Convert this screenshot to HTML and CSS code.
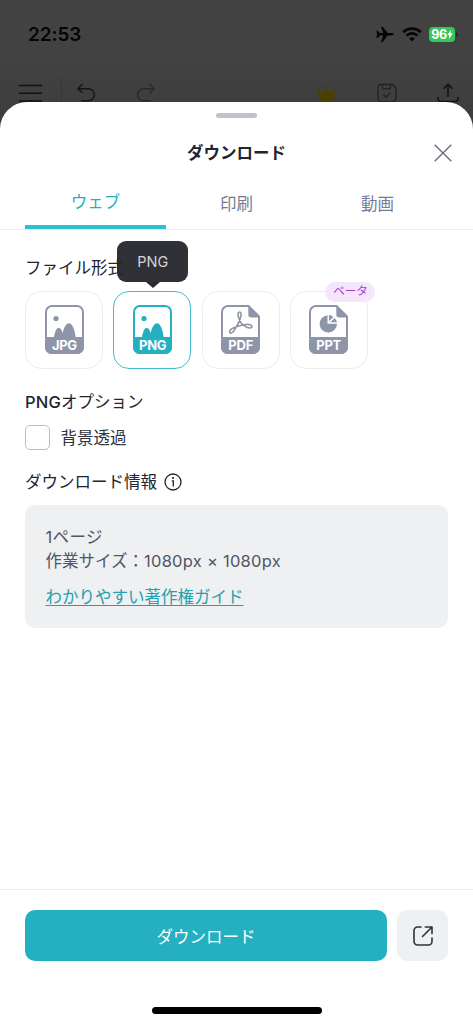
FILE: index.html
```html
<!DOCTYPE html>
<html lang="ja">
<head>
<meta charset="utf-8">
<title>ダウンロード</title>
<link rel="stylesheet" href="styles.css">
</head>
<body>
<div class="phone">
  <div class="status">
    <span class="clock">22:53</span>
    <div class="indicators">
      <svg width="18" height="17" viewBox="0 0 18 17"><path d="M.4 4.700h1.400l2 2.400h3.500L4.900.7h1.800l5 6.400h3.700c1.500 0 2.300.6 2.300 1.200s-.8 1.200-2.300 1.200h-3.700l-5 6.400H4.900l2.400-6.400H3.800l-2 2.400H.4l.8-3.600z" fill="#050505"/></svg>
      <svg width="20" height="15" viewBox="0 0 20 15" fill="none" stroke="#050505" stroke-width="2.700"><path d="M1.200 5.200a12.400 12.400 0 0 1 17.600 0M4.500 8.600a7.800 7.800 0 0 1 11 0"/><path d="M10 14.500l-3-3a4.200 4.200 0 0 1 6 0z" fill="#050505" stroke="none"/></svg>
      <div class="battery"><span>96</span><svg width="6" height="9" viewBox="0 0 6 9"><path d="M4 0L.3 5h2L1.800 9 5.800 3.600H3.600z" fill="#fff"/></svg></div>
      <i class="battery-tip"></i>
    </div>
  </div>
  <div class="toolbar">
    <svg class="menu" width="24" height="20" viewBox="0 0 24 20" fill="none" stroke="#111" stroke-width="1.600"><path d="M0 2.500h23M0 10.300h23M0 18h23"/></svg>
    <i class="divider"></i>
    <svg class="undo" width="19" height="20" viewBox="0 0 19 20" fill="none" stroke="#151515" stroke-width="1.500"><path d="M5.400.9L1 5.700l4.400 4.300M1 5.700h10.400a6 6 0 0 1 0 12H4"/></svg>
    <svg class="redo" width="19" height="20" viewBox="0 0 19 20" fill="none" stroke="#292929" stroke-width="1.400"><path d="M13.600.9L18 5.700 13.600 10M18 5.700H7.600a6 6 0 0 0 0 12H15"/></svg>
    <svg class="crown" width="19" height="15" viewBox="0 0 19 15" fill="#4b4000"><path d="M2.500 15L1 4.500l1.200-.7 4.300 3.500 2.300-5.800h1.400l2.300 5.800 4.300-3.500 1.200.7L16.500 15z"/><circle cx="1.500" cy="3.600" r="1.400"/><circle cx="9.500" cy="1.600" r="1.600"/><circle cx="17.500" cy="3.600" r="1.400"/></svg>
    <svg class="save" width="20" height="20" viewBox="0 0 20 20" fill="none" stroke="#222" stroke-width="1.400"><path d="M4 1.500h11.200L19 5.300V15a4 4 0 0 1-4 4H5a4 4 0 0 1-4-4V4.500a3 3 0 0 1 3-3zM5.400 1.500v3.400a1 1 0 0 0 1 1h6a1 1 0 0 0 1-1V1.500M6.300 11.400l2.800 2.700 4.500-4.500"/></svg>
    <svg class="upload" width="22" height="20" viewBox="0 0 22 20" fill="none" stroke="#111" stroke-width="1.500"><path d="M11 14V1.400M6.500 5.800L11 1.400l4.500 4.400M1 14v1.500a3 3 0 0 0 3 3h14a3 3 0 0 0 3-3V14"/></svg>
  </div>
  <main class="sheet">
    <div class="handle"></div>
    <header class="heading">
      <h1>ダウンロード</h1>
      <svg class="close" width="18" height="18" viewBox="0 0 18 18" fill="none" stroke="#686e83" stroke-width="1.400"><path d="M.7.7l16.600 16.600M17.300.7L.7 17.300"/></svg>
    </header>
    <nav class="tabs">
      <span class="tab active">ウェブ</span>
      <span class="tab">印刷</span>
      <span class="tab">動画</span>
    </nav>
    <section class="content">
      <h2>ファイル形式</h2>
      <div class="formats">
        <div class="tile">
          <svg class="file" width="39" height="49" viewBox="0 0 39 49">
            <rect x="1" y="1" width="37" height="47" rx="6" fill="#fff" stroke="currentColor" stroke-width="2"/>
            <path d="M0 32h9c.7-4.500 2.400-9.300 4.600-9.300 1.800 0 3.200 2.300 4.100 5.200 1.300-5.300 3.400-9.600 6.200-9.600 3.700 0 6.200 7.700 6.700 13.700H39v10.500a6.500 6.500 0 0 1-6.500 6.500h-26A6.500 6.500 0 0 1 0 42.500z" fill="currentColor"/>
            <circle cx="11" cy="13.500" r="2.600" fill="currentColor"/>
            <text x="19.500" y="45" textLength="25" class="ext">JPG</text>
          </svg>
        </div>
        <div class="tile selected">
          <div class="tooltip">PNG</div>
          <svg class="file" width="39" height="49" viewBox="0 0 39 49">
            <rect x="1" y="1" width="37" height="47" rx="6" fill="#fff" stroke="currentColor" stroke-width="2"/>
            <path d="M0 32h9c.7-4.500 2.400-9.300 4.600-9.300 1.800 0 3.200 2.300 4.100 5.200 1.300-5.300 3.400-9.600 6.200-9.600 3.700 0 6.200 7.700 6.700 13.700H39v10.500a6.500 6.500 0 0 1-6.500 6.500h-26A6.500 6.500 0 0 1 0 42.500z" fill="currentColor"/>
            <circle cx="11" cy="13.500" r="2.600" fill="currentColor"/>
            <text x="19.800" y="45" textLength="27.500" class="ext">PNG</text>
          </svg>
        </div>
        <div class="tile">
          <svg class="file" width="39" height="49" viewBox="0 0 39 49">
            <path d="M7 1h20.500L38 11.500V42a6 6 0 0 1-6 6H7a6 6 0 0 1-6-6V7a6 6 0 0 1 6-6z" fill="#fff" stroke="currentColor" stroke-width="2"/>
            <path d="M27.300 0L39 11.700v.8h-8.700a3 3 0 0 1-3-3zM0 32h39v10.500a6.500 6.500 0 0 1-6.500 6.500h-26A6.500 6.500 0 0 1 0 42.500z" fill="currentColor"/>
            <path d="M18.700 7c-1.700 0-2.100 2-1.400 4.600 1.300 4.800 4.500 9 8.400 10.700 2.700 1.200 5.300.6 5.300-.9 0-1.700-2.700-2.200-6.200-1.900-4.700.4-9.100 1.800-12.500 3.500-2.900 1.500-4.300 3.200-3.600 4.500.8 1.300 2.900.4 4.600-2.300 2.800-4.400 5.700-9.400 6.600-14.200C20.300 8.600 19.900 7 18.700 7z" fill="none" stroke="currentColor" stroke-width="1.600"/>
            <text x="19.800" y="45" textLength="25" class="ext">PDF</text>
          </svg>
        </div>
        <div class="tile">
          <span class="beta">ベータ</span>
          <svg class="file" width="39" height="49" viewBox="0 0 39 49">
            <path d="M7 1h20.500L38 11.500V42a6 6 0 0 1-6 6H7a6 6 0 0 1-6-6V7a6 6 0 0 1 6-6z" fill="#fff" stroke="currentColor" stroke-width="2"/>
            <path d="M27.300 0L39 11.700v.8h-8.700a3 3 0 0 1-3-3zM0 32h39v10.500a6.500 6.500 0 0 1-6.500 6.500h-26A6.500 6.500 0 0 1 0 42.500z" fill="currentColor"/>
            <path d="M18.500 10.200v8.500H28a8.700 8.700 0 1 1-9.500-8.500z" fill="currentColor"/>
            <path d="M20 10a8 8 0 0 1 4.300 1.900L20 16.300zM25.500 12.900a8 8 0 0 1 2.500 4.300h-6.700z" fill="currentColor"/>
            <text x="19.800" y="45" textLength="25" class="ext">PPT</text>
          </svg>
        </div>
      </div>
      <h2 class="options-title"><span class="latin">PNG</span>オプション</h2>
      <label class="option"><i class="checkbox"></i><span>背景透過</span></label>
      <h2 class="info-title">ダウンロード情報
        <svg width="18" height="18" viewBox="0 0 18 18" fill="none" stroke="#222430" stroke-width="1.300"><circle cx="9" cy="9" r="8"/><path d="M7.800 7.800H9.300v5.700"/><circle cx="9" cy="5" r="1.100" fill="#222430" stroke="none"/></svg>
      </h2>
      <div class="info">
        <p class="pages">1ページ</p>
        <p>作業サイズ：<span class="size">1080px × 1080px</span></p>
        <a>わかりやすい著作権ガイド</a>
      </div>
    </section>
    <footer class="actions">
      <button class="download">ダウンロード</button>
      <button class="share"><svg width="20" height="20" viewBox="0 0 20 20" fill="none" stroke="#30323c" stroke-width="1.600" stroke-linecap="round" stroke-linejoin="round"><path d="M8 1H4.500A3.500 3.500 0 0 0 1 4.500v11A3.500 3.500 0 0 0 4.500 19h11a3.500 3.500 0 0 0 3.500-3.500V12M9.500 10.500L19 1M12.300 1H19v6.500"/></svg></button>
    </footer>
    <div class="home-indicator"></div>
  </main>
</div>
</body>
</html>
```
FILE: styles.css
```css
* { box-sizing: border-box; }
body, h1, h2, p { margin: 0; }
body { font-family: Inter, "Noto Sans CJK JP", sans-serif; font-size: 16.5px; color: #222430; }
svg { display: block; flex: none; }

.phone { width: 473px; height: 1024px; display: flex; flex-direction: column; overflow: hidden; background: linear-gradient(#434343 0, #424242 60px, #3e3e3e 102px); }
.status { height: 69px; flex: none; display: flex; justify-content: space-between; align-items: center; padding: 0 15px 0 28px; }
.clock { font-size: 19px; font-weight: 600; color: #050505; letter-spacing: -.1px; }
.indicators { display: flex; align-items: center; }
.indicators svg + svg { margin-left: 8px; }
.battery { width: 26px; height: 15px; margin-left: 7px; border-radius: 4px; background: #34c759; color: #fff; display: flex; align-items: center; justify-content: center; font-size: 12.5px; font-weight: 700; line-height: 15px; letter-spacing: -.3px; }
.battery-tip { width: 2px; height: 5px; margin-left: 1px; border-radius: 0 2px 2px 0; background: #2d2d2d; }

.toolbar { height: 33px; flex: none; display: flex; align-items: flex-start; padding: 14px 14px 0 19px; overflow: hidden; }
.divider { width: 1px; height: 26px; margin: -6px 15px 0 18px; background: #383838; }
.redo { margin-left: 40px; }
.crown { margin: 3px 0 0 162px; }
.save { margin-left: 41px; }
.upload { margin-left: auto; }

.sheet { flex: 1; min-height: 0; display: flex; flex-direction: column; background: #fff; border-radius: 27px 27px 0 0; }
.handle { flex: none; width: 41px; height: 5px; margin: 11px auto 0; border-radius: 3px; background: #bfc4ca; }
.heading { flex: none; display: grid; grid-template-columns: 1fr auto 1fr; align-items: center; height: 70px; padding: 0 21px; }
.heading h1 { grid-column: 2; font-size: 16.5px; line-height: 24px; font-weight: 700; }
.close { justify-self: end; }
.tabs { flex: none; display: flex; height: 42px; padding: 0 25px; border-bottom: 1px solid #e9eaec; }
.tab { flex: 1; text-align: center; line-height: 33px; color: #747c94; }
.active { color: #23b0c0; border-bottom: 4px solid #28c2d1; line-height: 29px; }

.content { flex: 1; padding: 25px 25px 0; }
h2 { font-size: 16.5px; line-height: 26px; font-weight: 400; }
.formats { display: flex; gap: 10.3px; margin-top: 9.5px; }
.tile { position: relative; width: 78px; height: 78px; display: flex; align-items: center; justify-content: center; border: 1.5px solid #eceded; border-radius: 16px; color: #8e95a9; }
.selected { border-color: #43bdca; color: #24b0c1; }
.ext { font: 700 13px Inter, sans-serif; fill: #fff; text-anchor: middle; }
.tooltip { position: absolute; left: 3px; top: -51px; width: 71px; height: 41px; border-radius: 9px; background: rgba(36, 38, 43, .95); color: #d4d4d6; font-size: 14.5px; line-height: 41px; text-align: center; }
.tooltip::after { content: ""; position: absolute; left: 29px; top: 41px; border: solid transparent; border-width: 6px 7px 0; border-top-color: #292b30; }
.beta { position: absolute; left: 34.5px; top: -10px; width: 50px; height: 20px; border-radius: 10px; background: #f5e6fc; color: #a635d8; font-size: 11.5px; line-height: 19px; text-align: center; }
.options-title { margin-top: 20.5px; }
.latin { font-weight: 500; letter-spacing: .2px; }
.option { display: flex; align-items: center; gap: 10.5px; height: 26px; margin-top: 9px; color: #30323c; }
.checkbox { width: 25px; height: 25px; border: 1.5px solid #bcbdbf; border-radius: 5px; }
.info-title { display: flex; align-items: center; gap: 6.5px; margin-top: 19px; }
.info { height: 123px; margin-top: 10px; padding: 19.5px 20.5px; border-radius: 10px; background: #eff0f2; color: #515564; }
.info p { line-height: 24.5px; }
.pages { letter-spacing: .4px; }
.size { letter-spacing: .25px; }
.info a { display: inline-block; margin-top: 10px; line-height: 26px; color: #22a0ad; text-decoration: underline; text-decoration-thickness: 1px; text-underline-offset: 2px; text-decoration-skip-ink: none; }

.actions { flex: none; display: flex; gap: 10px; height: 92px; padding: 20px 25px; border-top: 1px solid #e9eaec; }
button { border: 0; padding: 0; font: inherit; height: 51px; border-radius: 10px; }
.download { flex: 1; background: #25b0c1; color: #fff; }
.share { width: 51px; display: flex; align-items: center; justify-content: center; background: #eff0f2; }
.home-indicator { flex: none; width: 170px; height: 7px; margin: 26px auto 10px; border-radius: 4px; background: #000; }
```
